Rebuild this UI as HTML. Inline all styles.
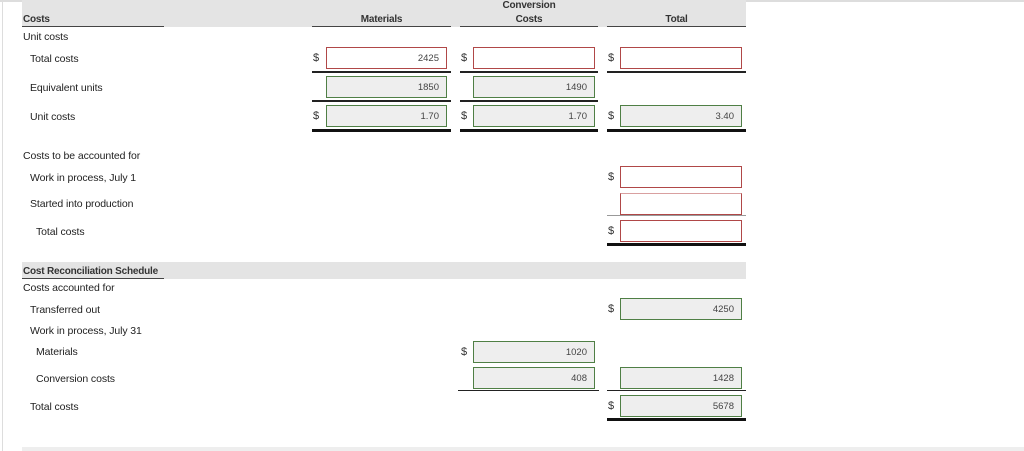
<!DOCTYPE html>
<html><head><meta charset="utf-8"><style>
body{margin:0;width:1024px;height:451px;background:#fff;position:relative;overflow:hidden;font-family:"Liberation Sans",sans-serif;font-size:10.5px;color:#222}
div{position:absolute;box-sizing:border-box}
.t{white-space:nowrap;line-height:12px;letter-spacing:-0.1px}
.b{font-weight:bold;color:#333;font-size:10px;letter-spacing:-0.2px}
.box{height:22px;border:1px solid #b04848;background:#fff;text-align:right;padding-right:7px;line-height:21px;font-size:9.5px;color:#444}
.g{border-color:#4f7f45;background:#eee}
.d{font-size:11px;color:#333}
.ln{height:1px;background:#222}
.th{height:3px;background:#111}
</style></head><body>
<div style="left:0;top:0;width:1024px;height:2px;background:#ddd"></div>
<div style="left:2px;top:0;width:1px;height:451px;background:#ddd"></div>
<div style="left:22px;top:447px;width:1002px;height:4px;background:#eee"></div>
<div style="left:22px;top:0;width:724px;height:27px;background:#e4e4e4"></div>
<div class="t b" style="left:23px;top:14px">Costs</div>
<div class="ln" style="left:22px;top:26px;width:142px;background:#444"></div>
<div class="t b" style="left:312px;top:14px;width:139px;text-align:center">Materials</div>
<div class="t b" style="left:460px;top:0px;width:138px;text-align:center">Conversion</div>
<div class="t b" style="left:460px;top:14px;width:138px;text-align:center">Costs</div>
<div class="t b" style="left:607px;top:14px;width:139px;text-align:center">Total</div>
<div class="ln" style="left:312px;top:26px;width:139px;background:#444"></div>
<div class="ln" style="left:460px;top:26px;width:138px;background:#444"></div>
<div class="ln" style="left:607px;top:26px;width:139px;background:#444"></div>

<div class="t" style="left:23px;top:31px">Unit costs</div>
<div class="t" style="left:30px;top:53px">Total costs</div>
<div class="t" style="left:30px;top:82px">Equivalent units</div>
<div class="t" style="left:30px;top:111px">Unit costs</div>

<div class="t d" style="left:313px;top:52px">$</div>
<div class="box" style="left:326px;top:47px;width:121px">2425</div>
<div class="t d" style="left:461px;top:52px">$</div>
<div class="box" style="left:473px;top:47px;width:122px"></div>
<div class="t d" style="left:608px;top:52px">$</div>
<div class="box" style="left:620px;top:47px;width:122px"></div>
<div class="ln" style="left:312px;top:71px;width:139px;height:2px"></div>
<div class="ln" style="left:460px;top:71px;width:138px;height:2px"></div>
<div class="ln" style="left:607px;top:71px;width:139px;height:2px"></div>

<div class="box g" style="left:326px;top:76px;width:121px">1850</div>
<div class="box g" style="left:473px;top:76px;width:122px">1490</div>
<div class="ln" style="left:312px;top:100px;width:139px;height:2px"></div>
<div class="ln" style="left:460px;top:100px;width:138px;height:2px"></div>

<div class="t d" style="left:313px;top:110px">$</div>
<div class="box g" style="left:326px;top:105px;width:121px">1.70</div>
<div class="t d" style="left:461px;top:110px">$</div>
<div class="box g" style="left:473px;top:105px;width:122px">1.70</div>
<div class="t d" style="left:608px;top:110px">$</div>
<div class="box g" style="left:620px;top:105px;width:122px">3.40</div>
<div class="th" style="left:312px;top:129px;width:139px"></div>
<div class="th" style="left:460px;top:129px;width:138px"></div>
<div class="th" style="left:607px;top:129px;width:139px"></div>

<div class="t" style="left:23px;top:150px">Costs to be accounted for</div>
<div class="t" style="left:30px;top:172px">Work in process, July 1</div>
<div class="t" style="left:30px;top:198px">Started into production</div>
<div class="t" style="left:36px;top:226px">Total costs</div>
<div class="t d" style="left:608px;top:171px">$</div>
<div class="box" style="left:620px;top:166px;width:122px"></div>
<div class="box" style="left:620px;top:193px;width:122px;border-top-color:#d9a0a0"></div>
<div class="ln" style="left:607px;top:215px;width:139px;background:#999"></div>
<div class="t d" style="left:608px;top:225px">$</div>
<div class="box" style="left:620px;top:220px;width:122px"></div>
<div class="th" style="left:607px;top:243px;width:139px"></div>

<div style="left:22px;top:262px;width:724px;height:17px;background:#e4e4e4"></div>
<div class="t b" style="left:23px;top:266px">Cost Reconciliation Schedule</div>
<div class="ln" style="left:22px;top:278px;width:142px;background:#444"></div>
<div class="t" style="left:23px;top:282px">Costs accounted for</div>
<div class="t" style="left:30px;top:304px">Transferred out</div>
<div class="t" style="left:30px;top:325px">Work in process, July 31</div>
<div class="t" style="left:36px;top:346px">Materials</div>
<div class="t" style="left:36px;top:373px">Conversion costs</div>
<div class="t" style="left:30px;top:401px">Total costs</div>

<div class="t d" style="left:608px;top:303px">$</div>
<div class="box g" style="left:620px;top:298px;width:122px">4250</div>
<div class="t d" style="left:461px;top:346px">$</div>
<div class="box g" style="left:473px;top:341px;width:122px">1020</div>
<div class="box g" style="left:473px;top:367px;width:122px">408</div>
<div class="box g" style="left:620px;top:367px;width:122px">1428</div>
<div class="ln" style="left:458px;top:390px;width:141px"></div>
<div class="ln" style="left:607px;top:390px;width:139px"></div>
<div class="t d" style="left:608px;top:400px">$</div>
<div class="box g" style="left:620px;top:395px;width:122px">5678</div>
<div class="th" style="left:607px;top:418px;width:139px"></div>
</body></html>
